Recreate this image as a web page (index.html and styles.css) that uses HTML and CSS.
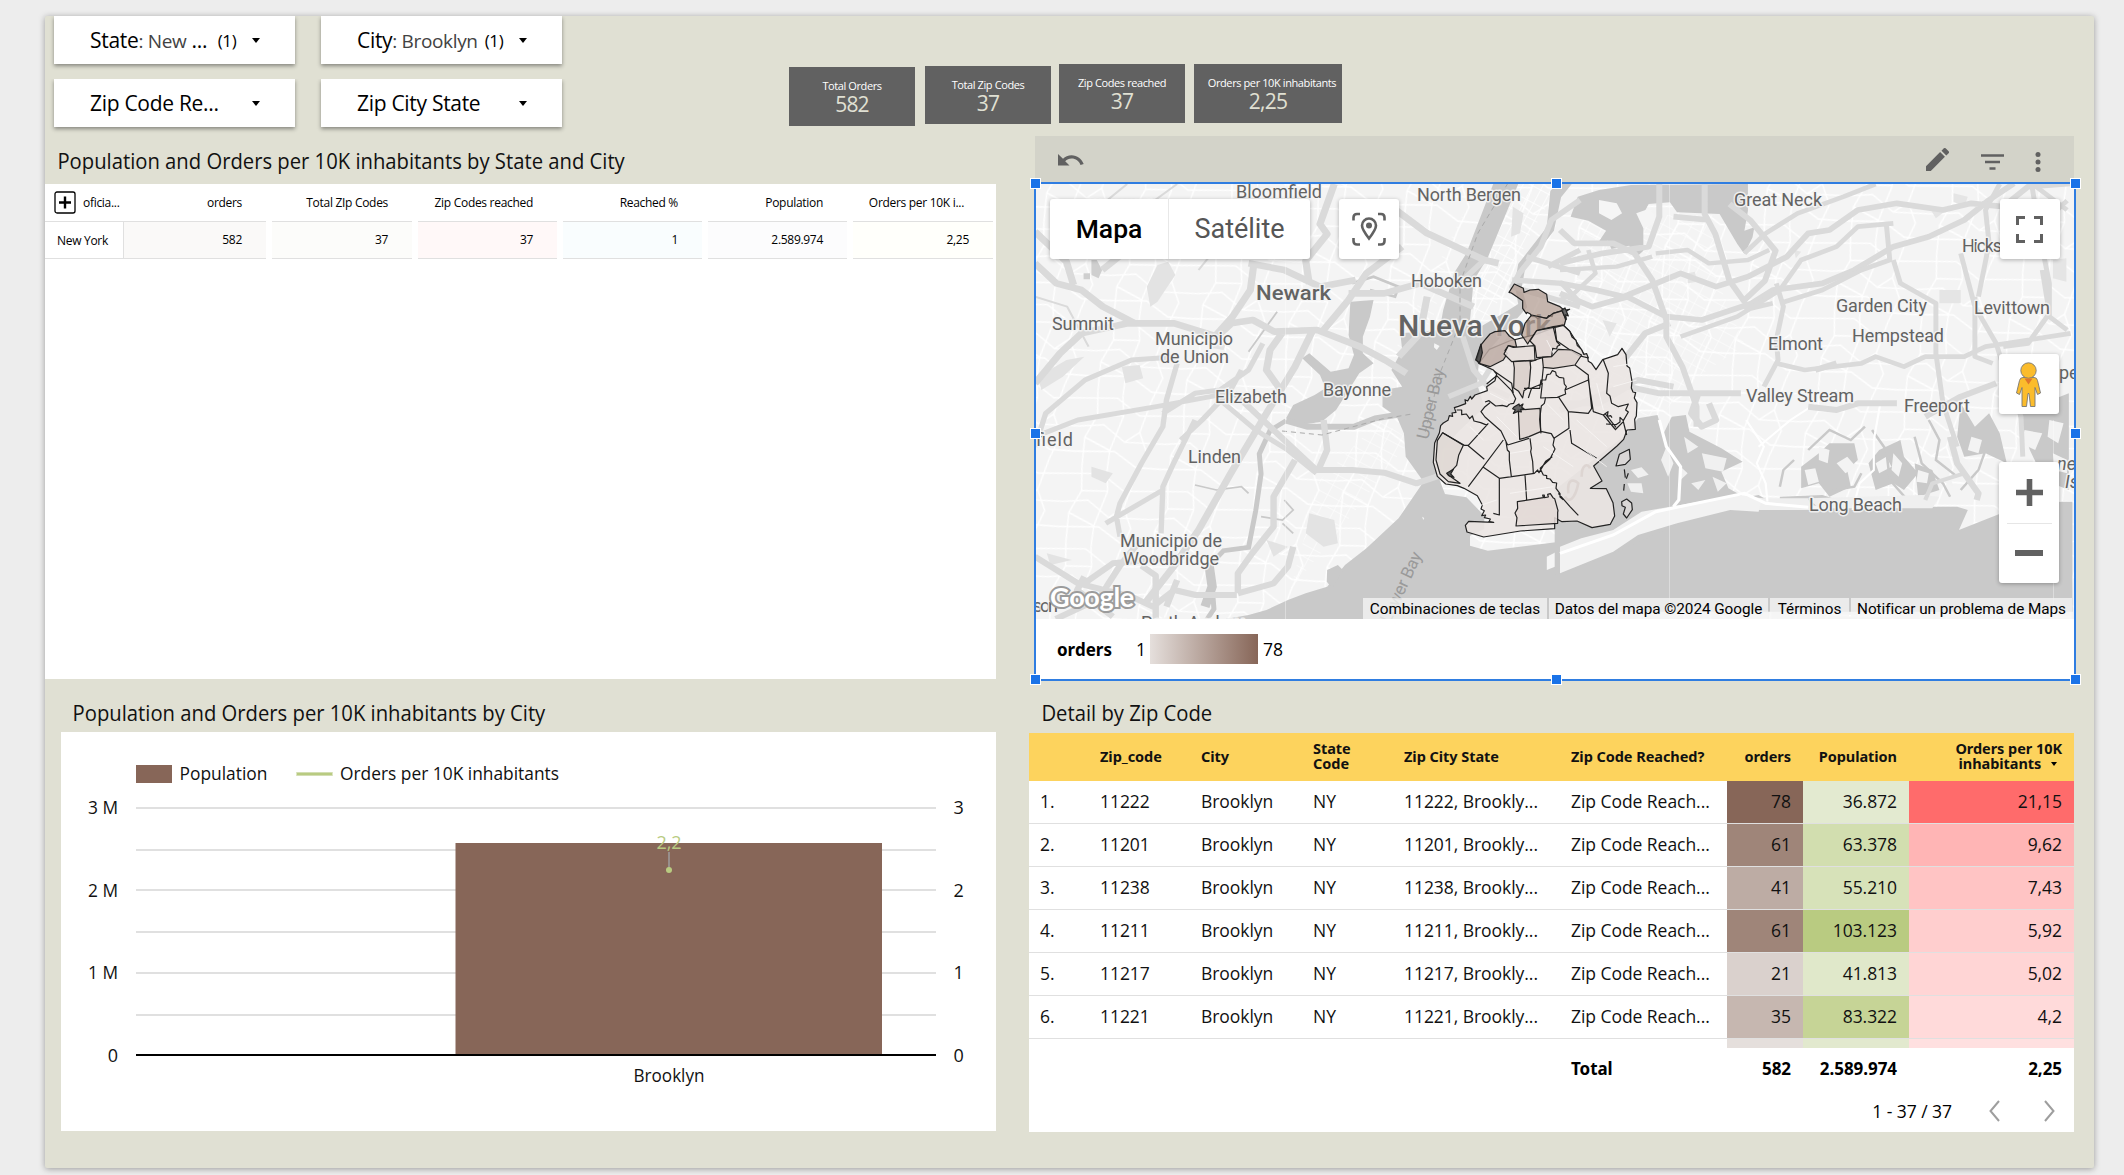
FILE: index.html
```html
<!DOCTYPE html>
<html lang="es">
<head>
<meta charset="utf-8">
<title>Orders by Zip Code</title>
<link rel="stylesheet" href="styles.css">
</head>
<body>
<main class="report">
  <header class="top">
    <div class="filters">
      <div class="filter"><span class="filter-text">State<span class="sel">: New</span> ...</span><span class="count">(1)</span><i class="caret"></i></div>
      <div class="filter"><span class="filter-text">City<span class="sel">: Brooklyn</span></span><span class="count">(1)</span><i class="caret"></i></div>
      <div class="filter"><span class="filter-text">Zip Code Re...</span><i class="caret"></i></div>
      <div class="filter"><span class="filter-text">Zip City State</span><i class="caret"></i></div>
    </div>
    <div class="cards">
      <div class="card card-a"><span class="card-label">Total Orders</span><span class="card-value">582</span></div>
      <div class="card card-b"><span class="card-label">Total Zip Codes</span><span class="card-value">37</span></div>
      <div class="card card-c"><span class="card-label">Zip Codes reached</span><span class="card-value">37</span></div>
      <div class="card card-d"><span class="card-label">Orders per 10K inhabitants</span><span class="card-value">2,25</span></div>
    </div>
  </header>

  <div class="columns">
    <section class="left">
      <h2 class="title t-pivot">Population and Orders per 10K inhabitants by State and City</h2>
      <div class="pivot">
        <div class="prow phead">
          <div class="pfirst"><span class="expand"><svg width="22" height="23" viewBox="0 0 22 23"><rect x="1" y="1" width="20" height="21" rx="2" fill="none" stroke="#000" stroke-width="1.3"/><path d="M11 5.5v12M5 11.5h12" stroke="#000" stroke-width="2.4"/></svg></span>oficia...</div>
          <div>orders</div><div>Total ZIp Codes</div><div>Zip Codes reached</div><div>Reached %</div><div>Population</div><div class="plast">Orders per 10K i...</div>
        </div>
        <div class="prow pbody">
          <div class="pfirst">New York</div>
          <div class="c1">582</div><div class="c2">37</div><div class="c3">37</div><div class="c4">1</div><div class="c5">2.589.974</div><div class="c6">2,25</div>
        </div>
      </div>
      <h2 class="title t-chart">Population and Orders per 10K inhabitants by City</h2>
      <div class="chart">
        <svg width="935" height="399" viewBox="61 732 935 399">
          <rect x="136" y="765" width="36" height="18" fill="#876658"/>
          <path d="M296 774h37" stroke="#dde5c4" stroke-width="4"/><path d="M297 774h35" stroke="#b9cb81" stroke-width="2.4"/>
          <g stroke="#e0e0e0" stroke-width="2"><path d="M136 808h800M136 850h800M136 890h800M136 932h800M136 973h800M136 1015h800"/></g>
          <rect x="455.5" y="843" width="426.500" height="211" fill="#876658"/>
          <path d="M136 1055h800" stroke="#000" stroke-width="2"/>
          <path d="M669 852v16" stroke="#9e9e9e" stroke-width="1.5"/><circle cx="669" cy="870" r="3" fill="#b9cb81"/>
          <g class="axis">
            <text x="179.500" y="780" textLength="88" lengthAdjust="spacingAndGlyphs">Population</text><text x="340" y="780" textLength="219" lengthAdjust="spacingAndGlyphs">Orders per 10K inhabitants</text>
            <g text-anchor="end"><text x="118" y="814" textLength="30" lengthAdjust="spacingAndGlyphs">3 M</text><text x="118" y="897" textLength="30" lengthAdjust="spacingAndGlyphs">2 M</text><text x="118" y="979" textLength="30" lengthAdjust="spacingAndGlyphs">1 M</text><text x="118" y="1062">0</text></g>
            <text x="953.500" y="814">3</text><text x="953.500" y="897">2</text><text x="953.500" y="979">1</text><text x="953.500" y="1062">0</text>
            <g text-anchor="middle"><text x="669" y="849" class="pt">2,2</text><text x="669" y="1082" textLength="71" lengthAdjust="spacingAndGlyphs">Brooklyn</text></g>
          </g>
        </svg>
      </div>
    </section>

    <section class="right">
      <div class="maptools">
        <svg class="undo" width="26" height="12" viewBox="0 0 26 12"><path d="M0 0v11.500h11.500L7.200 7.200C9 5.600 11 4.600 13.500 4.600c4.200 0 7.600 2.600 9 6.500l3.200-1C23.800 5 19.200 1.300 13.500 1.300 10.200 1.300 7.200 2.600 5 4.700z" fill="#616161"/></svg>
        <svg class="pencil" width="23" height="23" viewBox="3 3 18 18"><path d="M3 17.250V21h3.750L17.810 9.940l-3.750-3.750L3 17.250zM20.710 7.040a1 1 0 0 0 0-1.410l-2.340-2.340a1 1 0 0 0-1.410 0l-1.830 1.830 3.750 3.750 1.830-1.830z" fill="#616161"/></svg>
        <svg class="funnel" width="23" height="16" viewBox="0 0 23 16"><path d="M0 1.500h23M4 8h15M8.500 14.500h6" stroke="#616161" stroke-width="2.500"/></svg>
        <svg class="dots" width="6" height="20" viewBox="0 0 6 20"><g fill="#616161"><circle cx="3" cy="2.500" r="2.500"/><circle cx="3" cy="10" r="2.500"/><circle cx="3" cy="17.500" r="2.500"/></g></svg>
      </div>
      <div class="mapbox">
        <div class="map">
<svg class="mapsvg" width="1039" height="436" viewBox="1035 183 1039 436">
  <defs>
    <pattern id="st" width="88" height="77" patternUnits="userSpaceOnUse" patternTransform="rotate(12)"><g transform="scale(.8)" fill="none" stroke="#fff" stroke-width="1.700"><path d="M0 12L40 4 72 20 110 12M0 48L30 40 60 56 110 48M0 80L50 70 80 84 110 80M14 0L20 30 10 60 14 96M46 0L52 24 44 70 46 96M82 0L76 40 90 64 82 96M20 30L52 24M60 56L76 40M44 70L10 60"/></g></pattern>
    <pattern id="gr" width="15" height="9" patternUnits="userSpaceOnUse" patternTransform="rotate(-62)"><path d="M0 0H15M0 0V9" stroke="#fff" stroke-width="1.600"/></pattern>
    <pattern id="gr2" width="13" height="11" patternUnits="userSpaceOnUse" patternTransform="rotate(28)"><path d="M0 0H13M0 0V11" stroke="#fff" stroke-width="1"/></pattern>
  </defs>
  <rect x="1035" y="183" width="1039" height="436" fill="#f4f4f4"/>
  <rect x="1035" y="183" width="1039" height="436" fill="url(#st)"/>
  <path d="M1495 183L1455 290 1465 330 1490 318 1530 235 1560 183z" fill="url(#gr)"/>
  <path d="M1585 215h130v60l30 70-60 40-30 40h-60l-30-90z" fill="url(#gr2)"/>
  <path d="M1390 360l40-30 15-60 20-60M1290 590l50-60 70-90-30-20-60 60z" fill="url(#gr2)"/>
  <!-- parks, western half -->
  <g transform="translate(1020 170) scale(.35714 .33333)" fill="#e3e3e3">
    <path d="M385 285l30-10 20 40-50 80-20 15-10-60zM50 620l80-50 50-10-60 60-60 40zM285 590l50-5 10 40-50 15zM200 890l60 20-20 30-40-20zM75 1150l70 20-60 15zM810 1030l70 20 10 70-40 10-50-40zM1380 110l30 20-10 60-25 10zM690 1110l60 20-40 30zM550 500l30 10-10 30-30-5z"/>
    <path d="M200 270l15 0 15 30-10 25-20-10zM178 310h18v18h-18z" fill="#cfcfcf"/>
  </g>
  <g transform="translate(1560 170) scale(.35461 .33333)" fill="#e5e5e5">
    <path d="M1040 110l50 10-30 25zM1390 270l38-5v70l-38-10zM1070 360h60v40h-60zM360 310l20-5 8 30-28 5zM120 450l40 10-20 40zM660 240l20 5-15 20zM1110 70l40 10-10 30-30-15z"/>
  </g>
  <!-- water, western half -->
  <g transform="translate(1020 170) scale(.35714 .33333)" fill="#c9c9c9" stroke="none">
    <path d="M1325 42h70l-50 130-35 90-40 70-10 120-5 40 110-70 30-20-10-60 10-60 80-110 10-110 75-70v30l-45 60-20 100-80 110-10 60 15 60-75 90-60 70-5 70 20 70-70 70-50 60-15 60 25 70 60 10 50 55v40l-40 20v30l50 15 190-25 75-25V1350H560l80-15 50-15 60-30 50-20 60-20 50-65 60-50 90-90 70-110-50-75-5-70-20-50-40-30v-50l55-10-30-50 30-60-5-50 110-10 10-60 30-110 35-60z"/>
    <path d="M925 395l65-5-10 50-20 60v50l30 30-40 30-35 60-30 50-40 35-60 10-40-20 20-40 60-30 30-20-15-40-50-50 20-15 60 55 50-10 15-40-15-60z"/>
    <g fill="none" stroke="#c9c9c9"><path d="M745 752l60 18 130 0 60-25 90-15" stroke-width="18"/><path d="M745 752l-45 30-30 70 5 60-15 110-20 110-70 10-40 45 8 60 5 70-25 40" stroke-width="14"/><path d="M740 990l25 30-30 30-60-10M765 1090l-30-30M490 945l60 15 70-10 20 20M640 545l40-60 40-60" stroke-width="5"/><path d="M530 1190l8 60-20 60" stroke-width="26"/><path d="M930 340l60-20 70 30-10 30-70-20" stroke-width="8"/></g>
    <path d="M1475 1160l93-50v50l-93 40z" fill="#f5f5f5"/>
    <path d="M860 1200l30-15 14 15-10 20-20 35-15-20z"/>
    <path d="M1160 520l15 8-8 12-8-8zM1126 1040l6 4-3 6z" fill="#f5f5f5"/>
  </g>
  <!-- water, eastern half -->
  <g transform="translate(1560 170) scale(.35461 .33333)" fill="#c9c9c9">
    <path d="M30 140l20-60 60-20 90-15 330-3v80l-10 60 28-10-5 30-23 50-20-30-50-90-120-5-20-30-60 5-20 40 35 10-30 20v70l-20 20-20-35-50 10-10-25-30 10 25-40-50-30z"/>
    <path d="M110 90l50 10 15 30-30 20-35-20zM215 130l40-15 20 40-40 20z" fill="#f5f5f5"/>
    <path d="M0 1180l60-30 110-50 60-40 100-30 170-45 60-10 50 30 30 15 120-5 310-5 50 0 30 10-25 60 130-55 100-30h90v330H0z"/>
    <path d="M185 795l35-50 55-10 15 60 25-55 40-5 10 50 90 50 60 40-60 30 20 50 50 30-30 25-120 30-80 40-90 45-130 60-90 30V960z"/>
    <path d="M400 850l70 15-10 40-50-10zM350 800l40 30-30 20zM300 830l20 50-15 40-20-50zM200 900l30-8 20 22-30 10zM190 940h40l5 30-35-5zM370 940l40-10-20 30zM340 890l20 20-20 20zM430 920l40 20-25 25z" fill="#f0f0f0"/>
    <path d="M680 890l50-40 30-30h70l10 50-30 30 10 50-60 30-30-40-50 15zM870 880l30-40 60-30 10 50 40 50-40 50-30-20-50 20zM1130 700l40 70 40-40 30 60 20 90-60-30-60 10-20-60zM1290 730l145-60v290l-70-30-40-90zM1000 880l50 20 20 60-60 20zM620 980l120-5 60 20-30 15-150-10z"/>
    <g fill="#f3f3f3"><path d="M690 900l30-5 10 40-30 10zM730 830l30 10-5 40-25-10zM780 880l30-20 25 30-30 20zM890 880l30-20 15 30-35 20zM940 850l25 30-10 40-20-20zM1010 900l30 10-5 30-30-5zM1160 800l30 10-10 40-30-10zM1060 860l30 30 20 60-40-20zM1120 850l40 30-20 40zM1310 780l50 10-20 50-40-20zM1380 750l40 10-15 60-30-20zM1390 850l40 20v40l-35-10z"/></g>
    <g fill="none" stroke="#c9c9c9" stroke-width="7"><path d="M700 840l60-60 60 30 40-40M770 960l60-10 20-40M880 780l40 60 10 90 50 60M1000 800l20 80 60 60 20 40M1040 750l30 60-10 60 60 50M1130 960l50-60 20-60M660 870l-30 30-10 50"/></g>
    <path d="M525 1020l45-35 130 0 10 35zM700 985l320-10 50 5-20 35-320 0z" fill="#efefef"/>
    <path d="M0 1130l60-25 90-25 80-55 110-20 160-30 70 10-10 40-80-5-150 40-110 35-70 50-150 65z" fill="#f2f2f2"/>
    <path d="M0 1150l150-55 120-70 250-55 60 30 120 12M280 750l20 80 40 60-5 100-15 20" fill="none" stroke="#fff" stroke-width="9"/>
    <path d="M525 750l50 80-20 50 25 60 5 55M560 830l90-80 130-90M825 1020l20-80 40-40v-90l20-120" fill="none" stroke="#fff" stroke-width="6"/>
  </g>
  <!-- highways -->
  <g fill="none" stroke="#dadada" stroke-linejoin="round">
    <g transform="translate(1020 170) scale(.35714 .33333)">
      <path d="M42 640l70-90 60-60 130-30 130 0 120 40 40-40 60-10 60 35 120-5 120 50 70 40 60 40M42 280l60 60 70 20 60 50 90 50M230 300l70-60M150 345l-20-70-88-90M850 480l70-90 50-80 100-80M655 280l-10 80-50 80-50 60M740 480l-40 60-10 60 40 60M820 480l-50 110-80 140-100 180-90 170-70 110-80 110M920 370l100 0 100-30 150 70M1140 380l-20 110-60 70M1040 110l100 80 160 80 40 10M640 280l100 20 100 50 100-20M880 42l-40 120 20 30-60 80 10 70" stroke-width="20"/>
      <path d="M42 800l120-50 220-40 200-40M42 830l30-100 110-100 130-60 130-10M440 580l-30 110-10 80-60 110-60 120-10 40 10 60M490 750l-60 130-30 70-5 140M240 1060l160-100M620 600l-30 60-80 90-60 60M560 690l100 90 90 60 80 70M400 730l90-60 70-10 80-60 40-80" stroke-width="15"/>
      <path d="M600 670l80 80 150 150 100 0 90 8 90 32 70-25M850 750l10 90-25 60M770 870l-60 110v90l-60 80-40 60v60M610 1270l100-30 40-50 15-60M380 1347v-130l-40-30M42 1160l120 80 150 40 60 30 60-50 60 15 115 0M180 1240l80-60 190-20M180 1220l-20 40 100 80M440 1230l-30 80M100 1347l120-60 60-100 60-80" stroke-width="18"/>
      <path d="M1568 90l-80 60-30 80-60 80-20 40 190 60M1568 240l-90 50M1568 310l-150-50M1300 270l-70 70M1200 680l90-40 90-150M1568 400l-50-60-140-10M1240 500l30 100 40 50 60 30" stroke-width="16"/>
      <path d="M150 120l80 60 110-60 100-78M300 42l-80 70M560 220l-60 80M42 380l90 30 60 120" stroke-width="6"/>
    </g>
    <g transform="translate(1560 170) scale(.35461 .33333)">
      <path d="M0 280l120-30 130-20 30-90V42M408 42v90l30 60 40 140 40 60 60-60 30-90-70-90-60-50M0 180l40 40 110 0 60 30 50 80 40 120 0 50 45 90 40 120 0 60M0 340l100 20 80 20 160-70 100 40 90-30 110-60 60-70 60-10 80-60 110-20 130 20 80-20 90 10 70-60 250-20M0 370l90 40 100-30 110 60 100 10 140-50 60-40 140-20 90-40 110-70 100-30 100-50 70-60 70-50M320 140l100 10" stroke-width="17"/>
      <path d="M340 500l160-60 120-80 60-90 100-40 60-60 100-10M610 340l20 70-20 100 5 60-40 80M620 400l120-40 110-60 80-30-10-110M940 270l20 70 50 30 50 30v150l20 150 40 130M610 580l80 20 160-20 40-20 80 30 60-30 110 0 60-30 120-20 120-20M520 250l60-60 90-60 130-50 90-38M1130 250l40 160 60 110 20 70 50 150 5 120M1180 380l30-160-10-100 40-78M1330 42l20 130 80-80M1360 300l20 130-60 90-70 10M1350 180l30 160v100l50 40M1170 380l0 180 50 20M600 400l-80 20M1430 120l-100-80" stroke-width="14"/>
      <path d="M0 700l110 0 80-50 90 20h230M390 670l-20 60 30 40 40-20-20-50M700 710l80 10 60-20h110M1030 740l100-60 100-40M1100 800l20 80 60 90-5 20M180 570l60-80 70-30M0 720l60-20 160-70 100 20M720 600l60-20" stroke-width="18"/>
      <path d="M1030 990l20-50 90-30" stroke-width="12"/>
      <path d="M80 240l20 70-60 60-40 20M270 250l90-10 60 40 110-10 60-30M0 300l160-10 100-30" stroke-width="13"/>
    </g>
  </g>
  <g fill="none" stroke="#aaa" stroke-width="1" stroke-dasharray="5 4"><path d="M1508 183l-30 50-18 50v40l-20 50-15 60M1282 431l40 4 60-16 30-5"/></g>
  <path d="M1669.500 183v436M1285.500 183v436M2053.500 420v199" stroke="#fff" stroke-opacity=".35"/>
  <!-- place names -->
  <g class="places">
    <text x="1236" y="197.500" textLength="86">Bloomfield</text><text x="1417" y="200.500" textLength="104">North Bergen</text>
    <text x="1411" y="287" textLength="71">Hoboken</text><text x="1052" y="330" textLength="62">Summit</text>
    <text x="1155" y="345" textLength="78">Municipio</text><text x="1160" y="363" textLength="69">de Union</text>
    <text x="1215" y="402.500" textLength="72">Elizabeth</text><text x="1323" y="396" textLength="68">Bayonne</text>
    <text x="1036" y="446" textLength="37">field</text><text x="1188" y="462.500" textLength="53">Linden</text>
    <text x="1120" y="547" textLength="102">Municipio de</text><text x="1123" y="564.500" textLength="96">Woodbridge</text>
    <text x="1033" y="612" textLength="25">son</text><text x="1141" y="629" textLength="103">Perth Amboy</text>
    <text x="1734" y="205.500" textLength="88">Great Neck</text><text x="1962" y="252" textLength="40">Hicks</text>
    <text x="1836" y="312" textLength="91">Garden City</text><text x="1974" y="313.500" textLength="76">Levittown</text>
    <text x="1852" y="342" textLength="92">Hempstead</text><text x="1768" y="350" textLength="55">Elmont</text>
    <text x="1746" y="402" textLength="108">Valley Stream</text><text x="1904" y="412" textLength="66">Freeport</text>
    <text x="1809" y="511" textLength="93">Long Beach</text><text x="2059" y="379">pe</text>
    <text x="2057" y="470" font-style="italic">ne</text><text x="2065" y="488" font-style="italic">Is</text>
    <text class="mid" x="1256" y="300" textLength="75" lengthAdjust="spacingAndGlyphs">Newark</text>
    <text class="big" x="1398" y="336" textLength="153" lengthAdjust="spacingAndGlyphs">Nueva York</text>
    <text class="bay" transform="translate(1428 440) rotate(-77)" textLength="72">Upper Bay</text>
    <text class="bay" transform="translate(1390 624) rotate(-65)" textLength="76">Lower Bay</text>
  </g>
  <!-- zip code areas -->
  <g transform="translate(1380 260) scale(.33333)" stroke="#222" stroke-width="3.600" stroke-linejoin="round" fill="#ebe5e3" fill-opacity=".88">
    <path d="M297 310l43 20 10 12-5 20-25 18 2 12-37 13-10 12-4-8-8 14-8-4 2 12-22 8-12 4 5 14-12 2 2 10-10-2-4 14-14 8-8 8-4 22-14 30-4 58 12 42 25 23 35 5 20 8 40 22 15 28-4 12 10 5-8 15 12-2-4 8 18 4-4 8 14 2-75-3-10 12 5 20 50 15 110-18 103-7v-33l22 12 45-2 45 20 55-10 13-25-5-40-20-42-48-1 35-22-25-45 70-60 20-20 10-28 25-2-2-30 5-10 2-40-8-14 4-16-8-2-5-12 2-20-7-40-8-6-3-34-12-19-13 19-45 15-20 30-13-19-10-6-2-12-8-4-12-21-35-55-20-19-80 30-80 20-60 25z"/>
    <path fill="#b39d92" fill-opacity=".72" d="M403 72l27 13 2 12 18-7 25-2 25 15 3 22 37 15 12 10-32 10-4 10-10-3-6 8-20-4-6 5-8-6-11-1-4-7-10-5-2 4-11-16v-23l-34-23-7-2z"/>
    <path fill="#b39d92" fill-opacity=".7" d="M455 165l45 10 20-15 28-8 9 28-4 15-33 5-50 12-20 28-7 12-18-27 10-35z"/>
    <path fill="#ded4d0" d="M470 212l50-10 10 43 10 10-8 4-2 8-12-2-3 25-45 3-5-35-15-15z"/>
    <path d="M525 202l25-6 20 19 6 16 12 10 4 16 13 12 6 14 9-2 5 13-28-7-27-17-40-28z"/>
    <path fill="#bdaca4" fill-opacity=".85" d="M330 222l15-7 30-3 13 16 17 12 5 22-25-5-10 15 7 8-12 20-40 20-33-10-7-10 13-45 12-15z"/>
    <path fill="#e5dedb" d="M385 257l15 5 63-5 2 43-70 5-23-23z"/>
    <path fill="#d9cfcb" d="M487 292l28-2 20-22 40 2 30 15-20 30-65 10-30-3z"/>
    <path fill="#d9cfcb" d="M400 305l50-3 2 20-5 60-15 10-4 22-12-20-15-10 2-60z"/>
    <path fill="#dfd6d2" d="M415 450l65-5 2 70-35 15-28 8z"/>
    <path fill="#e2d9d6" d="M412 725l78-12-2-8 5 0 0 8 12-2-2-8 8-2 8 12 5 3 10 36-1 5v33l-125 8 3-25-6-14 8-14z"/>
    <path fill="#dfd8d4" d="M188 518l62 38-14 30-6 30-26 28 36 26-35-5-25-23-12-42 4-58z"/>
    <path fill="none" d="M465 300l25-8M450 305l20-5M490 322l-5 50-30 12-10 30M479 385l4-25 14 0 4-16 10-2 6-10 10 4 2 10 8 6 14 2 2 18 6 8-4 10 2 12-25 10-50 2 5-45M345 335l50 35 5 30M320 372l30-25 45 45 12 24-6 14-12 2-8 8-14-4-20 2-20-16-12 4M585 315l40 30v15l-70 30M432 385l48 0M497 412l-4 18-9 8-5 40 4 42M535 410l30 45 2 50-45 30-8-14-32-7M565 455l60 5 10-15-10-95M625 360l15 95 30 10 14-10-2 14 10-2 4 6M670 300l15 40-5 60 10 8 5 22 20 10 30-8-8 18 8 6-15 26-10-10 0 14-12 8-30-2M670 465l35 42M676 462l32 40M705 510l25-25 10 40M570 510l5 40 75 45M330 428l-15 12-12 15 12 16 48 42 20 42M230 450l15 0 0 14 14-2 10 14 8-8 5 15 20 5 20 8M188 518l65 38 10 0 50 42M325 490l-60 66M370 540l-105 140M308 620l50 35v110l-18-5M378 545l4 25 6 6 0 24 6 50M358 655l105-15 10-10 4 8 20-34 20-14M450 535l4 30-2 10 6 30 2 35M435 645l5 75M480 625l10 20 10 2 0 8 10 2 8 10 12 2-2 16 12 16 0 10 10 8M523 535l-4 20 6 12-15 30-30 28M383 555l64-20M535 700l35 40 25 26"/>
    <path fill="#555" d="M403 440l14-8 2 6 10-6-4 10 7 4-10 2 2 8-10-2-14 6 6-10-8-4zM200 640l20-12-8 14 10 10-14-4z"/>
    <path fill="#444" d="M303 252l-16 48 12 8 8-30z"/>
    <path d="M545 150l10-6 2 6 12-2-10 6 6 14-8-4 2 14-8-14z" fill="#555"/>
    <path d="M718 583l30-15 3 30-15 15-28 5zM733 628l3 25M745 640l-6 16M733 672l-2 20M725 725l15-8 15 12 2 20-17 25-10-12 6-20-10-5z" fill-opacity=".5"/>
    <g fill="none" stroke="#ddd5d2" stroke-width="8"><path d="M565 700c-5-50 20-40 30-30-10 50-30 60-40 40M605 650c0-40 20-40 25-25"/></g>
    <g fill="none" stroke="#f8f5f4" stroke-width="2.500"><path d="M330 400l60 30M350 470l60 60M270 500l40 40M500 430l50 50M490 560l90 60M390 700l130-20M390 580l60-10M500 240l20 40M590 480l90 80M600 560l80 60M700 320l60-10M700 380l70-20M650 370l20 80M290 740l60-20"/></g>
  </g>
</svg>
          <div class="ctl maptype"><span class="on">Mapa</span><span class="off">Satélite</span></div>
          <div class="ctl locate"><svg width="34" height="34" viewBox="0 0 34 34" fill="none" stroke="#616161" stroke-width="2.600"><path d="M1.500 8.500V5.500q0-3.500 3.500-3.500H8M26 2h3q3.500 0 3.500 3.500v3M32.500 26v3q0 3.500-3.500 3.500h-3M8 32.500H5q-3.500 0-3.500-3.500v-3"/><path d="M17 26.500C12 20 10 17 10 13.500a7 7 0 0 1 14 0C24 17 22 20 17 26.500z"/><circle cx="17" cy="13.500" r="3" fill="#616161" stroke="none"/></svg></div>
          <div class="ctl full"><svg width="27" height="27" viewBox="0 0 27 27" fill="none" stroke="#616161" stroke-width="3"><path d="M1.500 9V1.500H9M18 1.500h7.500V9M25.500 18v7.500H18M9 25.500H1.500V18"/></svg></div>
          <div class="ctl pegman"><svg width="25" height="45" viewBox="0 0 25 45"><g fill="#fbbc2c" stroke="#777" stroke-width=".9"><path d="M7 15.500h11q3 0 3.500 3l3 12.500-3 1.500-2.500-7v19h-4.500l-1.500-13h-1l-1.500 13H6v-19l-2.500 7L.5 31l3-12.500q.5-3 3.500-3z"/><circle cx="12.500" cy="8.500" r="7.700"/></g><path d="M8.500 16.500h8l-4 6z" fill="#e0762b"/></svg></div>
          <div class="ctl zoom"><span><svg width="27" height="27" viewBox="0 0 27 27"><path d="M13.500 0v27M0 13.500h27" stroke="#616161" stroke-width="5.600"/></svg></span><span><svg width="28" height="6" viewBox="0 0 28 6"><path d="M0 3h28" stroke="#616161" stroke-width="6"/></svg></span></div>
          <span class="glogo">Google</span>
          <div class="credits"><span class="k1">Combinaciones de teclas</span><span class="k2">Datos del mapa ©2024 Google</span><span class="k3">Términos</span><span class="k4">Notificar un problema de Maps</span></div>
        </div>
        <div class="legend"><b>orders</b><span class="lo">1</span><i class="ramp"></i><span>78</span></div>
        <div class="selection"><i class="h tl"></i><i class="h tc"></i><i class="h tr"></i><i class="h ml"></i><i class="h mr"></i><i class="h bl"></i><i class="h bc"></i><i class="h br"></i></div>
      </div>
      <h2 class="title t-detail">Detail by Zip Code</h2>
      <div class="detail">
        <div class="drow dhead"><div></div><div>Zip_code</div><div>City</div><div>State<br>Code</div><div>Zip City State</div><div>Zip Code Reached?</div><div class="n">orders</div><div class="n">Population</div><div class="n"><span>Orders per 10K<br>inhabitants <i class="caret small"></i></span></div></div>
        <div class="drow"><div>1.</div><div>11222</div><div>Brooklyn</div><div>NY</div><div>11222, Brookly...</div><div>Zip Code Reach...</div><div class="n" style="background:#876658">78</div><div class="n" style="background:#e3ead0">36.872</div><div class="n" style="background:#ff6b6b">21,15</div></div>
        <div class="drow"><div>2.</div><div>11201</div><div>Brooklyn</div><div>NY</div><div>11201, Brookly...</div><div>Zip Code Reach...</div><div class="n" style="background:#9f8579">61</div><div class="n" style="background:#d2deaf">63.378</div><div class="n" style="background:#ffb5b5">9,62</div></div>
        <div class="drow"><div>3.</div><div>11238</div><div>Brooklyn</div><div>NY</div><div>11238, Brookly...</div><div>Zip Code Reach...</div><div class="n" style="background:#bdaca4">41</div><div class="n" style="background:#d7e2b9">55.210</div><div class="n" style="background:#ffc4c4">7,43</div></div>
        <div class="drow"><div>4.</div><div>11211</div><div>Brooklyn</div><div>NY</div><div>11211, Brookly...</div><div>Zip Code Reach...</div><div class="n" style="background:#9f8579">61</div><div class="n" style="background:#b9cb81">103.123</div><div class="n" style="background:#ffcece">5,92</div></div>
        <div class="drow"><div>5.</div><div>11217</div><div>Brooklyn</div><div>NY</div><div>11217, Brookly...</div><div>Zip Code Reach...</div><div class="n" style="background:#dad1cd">21</div><div class="n" style="background:#e0e8ca">41.813</div><div class="n" style="background:#ffd5d5">5,02</div></div>
        <div class="drow"><div>6.</div><div>11221</div><div>Brooklyn</div><div>NY</div><div>11221, Brookly...</div><div>Zip Code Reach...</div><div class="n" style="background:#c6b7b0">35</div><div class="n" style="background:#c6d496">83.322</div><div class="n" style="background:#ffdada">4,2</div></div>
        <div class="drow peek"><div></div><div></div><div></div><div></div><div></div><div></div><div style="background:#e5dfdc"></div><div style="background:#e2e9ce"></div><div style="background:#ffe0e0"></div></div>
        <div class="drow total"><div></div><div></div><div></div><div></div><div></div><div>Total</div><div class="n">582</div><div class="n">2.589.974</div><div class="n">2,25</div></div>
        <div class="pager"><span>1 - 37 / 37</span><svg width="11" height="22" viewBox="0 0 11 22"><path d="M10 1L1.500 11 10 21" fill="none" stroke="#9e9e9e" stroke-width="2"/></svg><svg width="11" height="22" viewBox="0 0 11 22"><path d="M1 1l8.500 10L1 21" fill="none" stroke="#9e9e9e" stroke-width="2"/></svg></div>
      </div>
    </section>
  </div>
</main>
</body>
</html>
```
FILE: styles.css
```css
* { box-sizing: border-box; }
body { margin: 0; width: 2124px; height: 1175px; overflow: hidden; background: #ededed; color: #000; font-family: "Open Sans", "Noto Sans", sans-serif; padding: 16px 0 0 45px; }
svg { display: block; }
.report { width: 2049px; height: 1152px; background: #e0e0d3; border-radius: 2px; box-shadow: 0 1px 6px rgba(0,0,0,.35); }
.top { height: 120px; display: flex; }
.filters { display: grid; grid-template-columns: 241px 241px; grid-template-rows: 48px 48px; gap: 15px 26px; padding-left: 9px; align-content: start; }
.filter { background: #fff; display: flex; align-items: center; padding: 0 35.500px 0 36px; font-size: 21px; letter-spacing: -.3px; box-shadow: 0 2px 4px rgba(0,0,0,.4); white-space: nowrap; clip-path: inset(0 -6px -8px -6px); }
.filter-text { flex: 1; }
.sel { color: #424242; font-size: 19px; letter-spacing: -.35px; }
.count { font-size: 17px; margin-right: 15px; }
.caret { display: inline-block; border: 4.500px solid transparent; border-top: 5px solid #000; border-bottom: 0; }
.cards { display: flex; align-items: flex-start; margin-left: 227px; }
.card { width: 126px; height: 59px; background: #616161; color: #fff; display: flex; flex-direction: column; align-items: center; justify-content: center; white-space: nowrap; padding-top: 1px; }
.card-a { margin-top: 51px; }
.card-b { margin: 50px 0 0 10px; height: 58px; }
.card-c { margin: 48px 0 0 8px; }
.card-d { margin: 48px 0 0 9px; width: 148px; padding-left: 8px; }
.card-label { font-size: 11px; line-height: 15px; letter-spacing: -.4px; }
.card-value { font-size: 21px; line-height: 23px; letter-spacing: -.8px; color: #e0e0d3; }
.card-d .card-value { margin-left: -8px; }
.columns { display: flex; gap: 33px; }
.left { width: 951px; }
.right { width: 1046px; }
.title { margin: 0; font-weight: 400; font-size: 22px; line-height: 28px; white-space: nowrap; color: #111; transform: scaleX(.92); transform-origin: 0 0; }
.t-pivot { height: 48px; padding: 10px 0 0 13.500px; }
.pivot { height: 495px; background: #fff; font-size: 12px; letter-spacing: -.3px; }
.prow { display: grid; grid-template-columns: 79px 142px 146px 145px 145px 145px 146px; justify-content: start; height: 38px; width: 951px; white-space: nowrap; overflow: hidden; }
.prow > div { display: flex; align-items: center; justify-content: flex-end; padding: 0 24px 1px 0; border-bottom: 1px solid #e0e0e0; }
.prow > div:nth-child(n+3) { margin-left: 6px; }
.prow .pfirst { justify-content: flex-start; padding: 0 0 0 9px; }
.pbody .pfirst { padding-left: 12px; border-right: 1px solid #e0e0e0; }
.expand { margin-right: 7px; }
.phead .plast { padding-right: 29px; }
.pbody { height: 37px; }
.c1 { background: #faf9f8; }
.c2 { background: #fcfcfa; }
.c3 { background: #fff8f8; }
.c4 { background: #f9fdfe; }
.c5 { background: #fcfcfd; }
.c6 { background: #fffffb; }
.t-chart { height: 53px; padding: 19px 0 0 30px; }
.chart { margin-left: 16px; width: 935px; height: 399px; background: #fff; }
.axis { font-size: 18px; fill: #111; }
.axis .pt { fill: #b9cb81; }
.maptools { margin-left: 6px; width: 1039px; height: 47px; background: #d3d3c9; display: flex; align-items: center; padding: 0 33.500px 0 23px; }
.undo { margin-right: auto; }
.pencil { margin-right: 32px; margin-top: 0; }
.funnel { margin-right: 30.500px; margin-top: 4px; }
.dots { margin-top: 4px; }
.mapbox { position: relative; margin-left: 6px; width: 1039px; height: 497px; background: #fff; font-family: Roboto, sans-serif; }
.map { position: relative; height: 436px; overflow: hidden; }
.places { font-size: 18px; fill: #636363; stroke: #f5f5f5; stroke-width: 3px; paint-order: stroke; stroke-linejoin: round; stroke-opacity: .85; }
.places .mid { font-size: 21px; font-weight: 500; }
.places .big { font-size: 29px; font-weight: 500; }
.places .bay { font-size: 17px; fill: #9a9a9a; stroke: none; }
.ctl { position: absolute; background: #fff; border-radius: 3px; box-shadow: 0 1px 4px rgba(0,0,0,.3); display: flex; align-items: center; justify-content: center; width: 60px; height: 60px; }
.maptype { left: 15px; top: 16px; width: 260px; font-size: 27px; }
.maptype span { height: 60px; line-height: 60px; text-align: center; }
.on { width: 119px; font-weight: 500; font-size: 26.500px; border-right: 1px solid #e8e8e8; }
.off { width: 141px; color: #565656; }
.locate { left: 304px; top: 16px; }
.full { left: 964.500px; top: 16px; }
.pegman { left: 963.500px; top: 171px; }
.zoom { left: 964px; top: 279px; height: 121px; flex-direction: column; }
.zoom span { width: 45px; height: 60px; display: flex; align-items: center; justify-content: center; }
.zoom span + span { border-top: 1px solid #e6e6e6; }
.glogo { position: absolute; left: 15px; top: 396px; font: 700 27px/36px Lato, sans-serif; letter-spacing: -.3px; color: #fff; -webkit-text-stroke: 4px #9c9c9c; paint-order: stroke; }
.credits { position: absolute; right: 2px; bottom: 0; height: 21px; display: flex; gap: 2px; font-size: 15.300px; letter-spacing: -.05px; line-height: 22px; color: #000; }
.credits span { background: rgba(245,245,245,.75); text-align: center; white-space: nowrap; }
.k1 { width: 184px; }
.k2 { width: 219px; }
.k3 { width: 79px; }
.k4 { width: 221px; }
.legend { height: 60px; display: flex; align-items: center; padding-left: 22px; font: 17.500px "Open Sans", sans-serif; }
.legend b { width: 79px; font: 700 17px "Noto Sans", sans-serif; }
.lo { width: 14px; }
.ramp { width: 108px; height: 30px; margin-right: 5px; background: linear-gradient(90deg, #e5dfdc, #876658); }
.selection { position: absolute; left: -1px; top: -1px; width: 1042px; height: 499px; border: 2px solid #2f7de1; }
.h { position: absolute; width: 11px; height: 11px; margin: -5.500px; background: #1a73e8; border: 1px solid #fff; }
.tl, .tc, .tr { top: -.500px; }
.ml, .mr { top: 50.400%; }
.bl, .bc, .br { top: 100.200%; }
.tl, .ml, .bl { left: -1px; }
.tc, .bc { left: 50.100%; }
.tr, .mr, .br { left: 100.100%; }
.t-detail { height: 53px; padding: 18px 0 0 13.500px; }
.detail { width: 1045px; height: 399px; background: #fff; font-size: 17.500px; letter-spacing: -.05px; }
.drow { display: grid; grid-template-columns: 60px 101px 112px 91px 167px 167px 76px 106px 165px; height: 43px; white-space: nowrap; }
.drow > div { display: flex; align-items: center; padding: 0 12px 2px 11px; border-bottom: 1px solid #e0e0e0; color: #111; }
.drow > .n { justify-content: flex-end; text-align: right; }
.dhead, .total { font-family: "Noto Sans", sans-serif; font-weight: 700; }
.dhead { height: 48px; background: #fdd35d; font-size: 14.500px; line-height: 15px; }
.dhead > div, .peek > div, .total > div { border: 0; }
.caret.small { border-width: 3.500px; border-top-width: 4px; border-bottom: 0; margin: 0 5px 3px 6px; }
.peek { height: 9px; }
.total { height: 42px; font-size: 17px; }
.total > div { color: #000; }
.pager { display: flex; align-items: center; justify-content: flex-end; height: 41px; padding-right: 19px; }
.pager svg { margin-left: 37px; }
.pager svg + svg { margin-left: 44px; }
```
